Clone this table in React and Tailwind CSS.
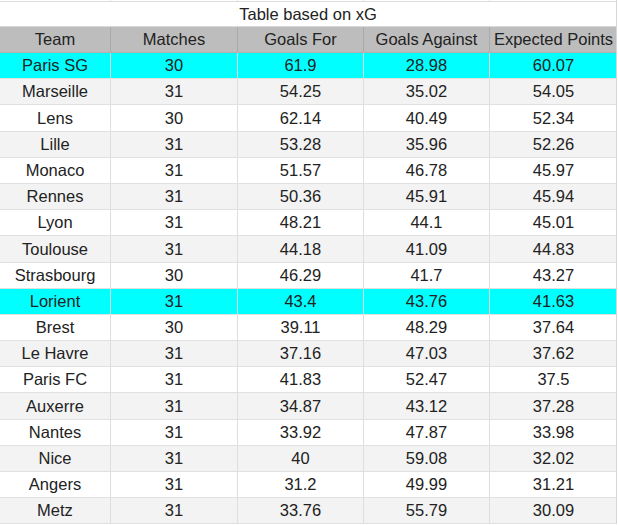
import React from "react";

const rows = [
  ["Paris SG", "30", "61.9", "28.98", "60.07"],
  ["Marseille", "31", "54.25", "35.02", "54.05"],
  ["Lens", "30", "62.14", "40.49", "52.34"],
  ["Lille", "31", "53.28", "35.96", "52.26"],
  ["Monaco", "31", "51.57", "46.78", "45.97"],
  ["Rennes", "31", "50.36", "45.91", "45.94"],
  ["Lyon", "31", "48.21", "44.1", "45.01"],
  ["Toulouse", "31", "44.18", "41.09", "44.83"],
  ["Strasbourg", "30", "46.29", "41.7", "43.27"],
  ["Lorient", "31", "43.4", "43.76", "41.63"],
  ["Brest", "30", "39.11", "48.29", "37.64"],
  ["Le Havre", "31", "37.16", "47.03", "37.62"],
  ["Paris FC", "31", "41.83", "52.47", "37.5"],
  ["Auxerre", "31", "34.87", "43.12", "37.28"],
  ["Nantes", "31", "33.92", "47.87", "33.98"],
  ["Nice", "31", "40", "59.08", "32.02"],
  ["Angers", "31", "31.2", "49.99", "31.21"],
  ["Metz", "31", "33.76", "55.79", "30.09"],
];

const headers = ["Team", "Matches", "Goals For", "Goals Against", "Expected Points"];
const highlighted = new Set(["Paris SG", "Lorient"]);

export default function App() {
  return (
    <div
      className="w-[618px] h-[525px] overflow-hidden bg-white text-[#222222]"
      style={{ fontFamily: '"Liberation Sans", Arial, sans-serif' }}
    >
      <div className="w-[617px] border-r border-[#d6d6d6]">
        <div className="grid grid-cols-[111px_127px_126px_126px_127px] h-[2px] border-b border-[#dcdcdc]">
          {headers.map((h, i) => (
            <div key={i} className="border-r border-[#e2e2e2] last:border-r-0" />
          ))}
        </div>
        <div className="h-[25px] flex items-center justify-center text-[16.5px] border-b border-[#d8d8d8] bg-white">
          Table based on xG
        </div>
        <div className="grid grid-cols-[111px_127px_126px_126px_127px] h-[26px] bg-[#bdbdbd] border-b border-[#b0b0b0]">
          {headers.map((h, i) => (
            <div
              key={i}
              className="flex items-center justify-center text-[16.5px] border-r border-[#a9a9a9] last:border-r-0 whitespace-nowrap"
            >
              {h}
            </div>
          ))}
        </div>
        {rows.map((r, ri) => {
          const bg = highlighted.has(r[0])
            ? "bg-[#00ffff]"
            : ri % 2 === 1
            ? "bg-[#f3f3f3]"
            : "bg-white";
          return (
            <div
              key={ri}
              className={`grid grid-cols-[111px_127px_126px_126px_127px] h-[26.2px] border-b border-[#e0e0e0] ${bg}`}
            >
              {r.map((c, ci) => (
                <div
                  key={ci}
                  className="flex items-center justify-center text-[16.5px] border-r border-[#dedede] last:border-r-0 whitespace-nowrap"
                >
                  {c}
                </div>
              ))}
            </div>
          );
        })}
      </div>
    </div>
  );
}
